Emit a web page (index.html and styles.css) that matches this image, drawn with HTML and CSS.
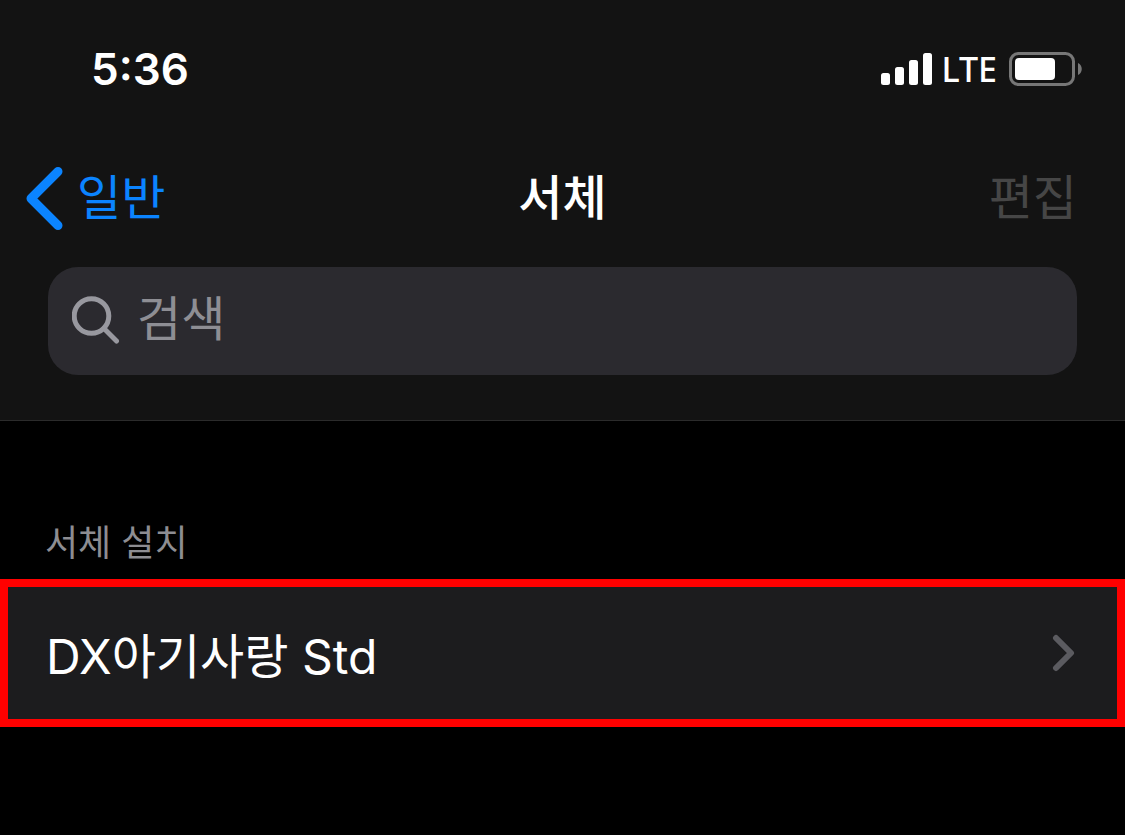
FILE: index.html
```html
<!DOCTYPE html>
<html lang="ko">
<head>
<meta charset="utf-8">
<meta name="viewport" content="width=device-width, initial-scale=1">
<title>서체</title>
<link rel="stylesheet" href="styles.css">
</head>
<body>
<header class="header">
  <div class="status">
    <time class="clock">5:36</time>
    <div class="indicators">
      <svg class="signal" viewBox="0 0 52 34" aria-hidden="true">
        <rect x="0" y="21" width="9" height="12" rx="2.5"/>
        <rect x="14" y="15" width="9" height="18" rx="2.5"/>
        <rect x="28" y="8" width="9" height="25" rx="2.5"/>
        <rect x="42" y="1" width="9" height="32" rx="2.5"/>
      </svg>
      <span class="network">LTE</span>
      <svg class="battery" viewBox="0 0 74 34" aria-hidden="true">
        <rect class="battery-shell" x="1.5" y="1.5" width="63" height="31" rx="8"/>
        <rect class="battery-level" x="6" y="6" width="40" height="22" rx="4"/>
        <path class="battery-cap" d="M69 11c5 2 5 10 0 12z"/>
      </svg>
    </div>
  </div>
  <nav class="navbar">
    <a class="back" href="#">
      <svg class="back-icon" viewBox="0 0 38 64" aria-hidden="true"><path d="M32 5.500 5 32.500l27 27"/></svg>
      <span>일반</span>
    </a>
    <h1 class="title">서체</h1>
    <button class="edit" type="button" disabled>편집</button>
  </nav>
  <label class="search">
    <svg class="search-icon" viewBox="0 0 48 50" aria-hidden="true"><circle cx="19.5" cy="20" r="17.3"/><path d="M32 32.5 44.5 45"/></svg>
    <input class="search-input" type="search" placeholder="검색" aria-label="검색">
  </label>
</header>
<main>
  <h2 class="section-title">서체 설치</h2>
  <a class="row" href="#">
    <span>DX아기사랑 Std</span>
    <svg class="chevron" viewBox="0 0 24 38" aria-hidden="true"><path d="M5 4 20 19 5 34"/></svg>
  </a>
</main>
</body>
</html>
```

FILE: styles.css
```css
* { box-sizing: border-box; }
body {
  margin: 0;
  background: #000;
  color: #fff;
  font-family: Inter, "Noto Sans CJK KR", sans-serif;
}
a { color: inherit; text-decoration: none; }
svg { display: block; flex: none; fill: none; stroke-linecap: round; stroke-linejoin: round; }
.header {
  padding: 39px 48px 45px;
  background: #131313;
  border-bottom: 1px solid #2b2b2b;
}
.status {
  display: flex;
  align-items: center;
  justify-content: space-between;
  height: 60px;
  padding-left: 43px;
}
.clock { font-size: 44px; font-weight: 600; }
.indicators { display: flex; align-items: center; gap: 8px; margin-right: -6px; }
.signal { width: 52px; height: 34px; fill: #fff; }
.network {
  padding-right: 4px;
  font-family: "Noto Sans", sans-serif;
  font-size: 34px;
  font-weight: 500;
  line-height: 40px;
}
.battery { width: 74px; height: 34px; }
.battery-shell { stroke: #777; stroke-width: 3; }
.battery-level { fill: #fff; }
.battery-cap { fill: #777; }
.navbar {
  display: grid;
  grid-template-columns: 1fr auto 1fr;
  align-items: center;
  height: 68px;
  margin: 65px 0 35px;
  font-size: 48px;
  line-height: 68px;
}
.back {
  display: flex;
  align-items: center;
  gap: 13px;
  margin-left: -22px;
  color: #0b84ff;
}
.back-icon { width: 38px; height: 64px; stroke: #0b84ff; stroke-width: 9; }
.title { margin: 0; font-size: 48px; font-weight: 500; }
.edit {
  justify-self: end;
  padding: 0;
  border: 0;
  background: none;
  color: #464646;
  font: inherit;
}
.search {
  display: flex;
  align-items: center;
  gap: 17px;
  height: 108px;
  padding: 0 24px;
  border-radius: 30px;
  background: #2b2a2f;
}
.search-icon { width: 48px; height: 50px; stroke: #98989f; stroke-width: 5; }
.search-input {
  flex: 1;
  min-width: 0;
  padding: 0 0 4px;
  border: 0;
  outline: 0;
  appearance: none;
  background: none;
  color: #fff;
  font: inherit;
  font-size: 48px;
  line-height: 68px;
}
.search-input::placeholder { color: #8e8e94; opacity: 1; }
.section-title {
  margin: 0;
  padding: 94px 45px 8px;
  color: #8d8d92;
  font-size: 36px;
  font-weight: 400;
  line-height: 56px;
}
.row {
  display: flex;
  align-items: center;
  justify-content: space-between;
  height: 148px;
  padding: 0 42px 0 38px;
  border: 8px solid #f00;
  background: #1c1c1e;
  font-size: 48px;
}
.chevron { width: 24px; height: 38px; stroke: #5b5b60; stroke-width: 6; }
```
